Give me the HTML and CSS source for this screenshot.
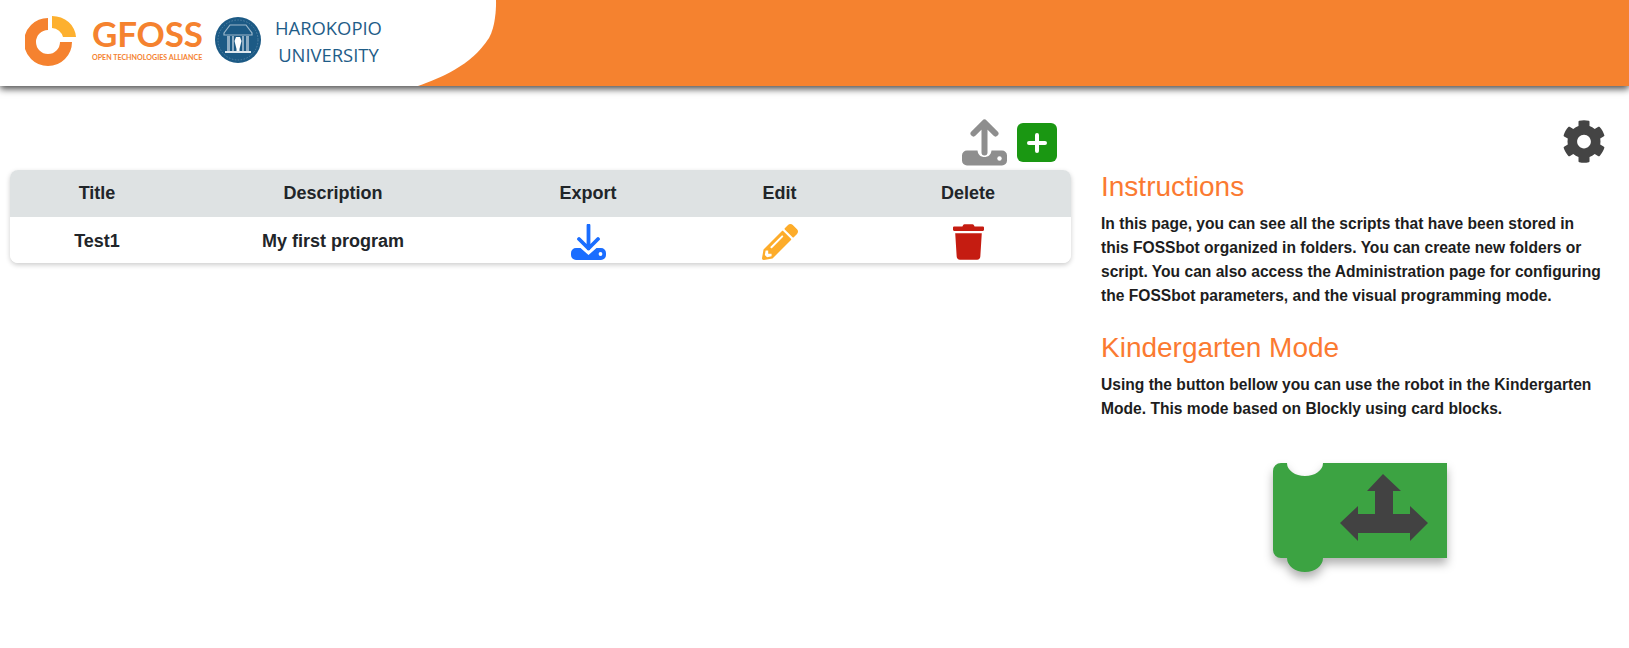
FILE: index.html
```html
<!DOCTYPE html>
<html lang="en">
<head>
<meta charset="utf-8">
<title>FOSSbot</title>
<link rel="stylesheet" href="styles.css">
</head>
<body>
<header class="topbar">
  <svg class="wave" viewBox="0 0 500 86" aria-hidden="true"><path d="M0 0H496C496 0 497 24 489 38C471 66 440 78 418 86H0Z"/></svg>
  <div class="brand">
    <svg class="gfoss-mark" viewBox="0 0 52 50" aria-hidden="true">
      <path class="ring" d="M23 8A18 18 0 1 0 41 26"/>
      <path class="ring-y" d="M27 0A24 22 0 0 1 51 21H38A12 12 0 0 0 27 12Z"/>
    </svg>
    <div class="gfoss-text">
      <span class="gfoss-name">GFOSS</span>
      <span class="gfoss-sub">OPEN TECHNOLOGIES ALLIANCE</span>
    </div>
    <svg class="seal" viewBox="0 0 46 46" aria-hidden="true">
      <circle cx="23" cy="23" r="23" fill="#1c5a85"/>
      <circle cx="23" cy="23" r="20" fill="none" stroke="#5f8bab" stroke-width=".8" stroke-dasharray="1.5 1.5"/>
      <path d="M9 16L15 8H31L37 16V18H9Z" fill="none" stroke="#9db8cb" stroke-width="1.200"/>
      <path d="M12 19h3v15h-3zM31 19h3v15h-3zM27 19h2v15h-2zM17 19h2v15h-2z" fill="#8fadc3"/>
      <path d="M21 20h4l1.500 4-2 8v2h-3v-2l-2-8Z" fill="#fff"/>
      <path d="M10 34h26v2H10z" fill="#dfe8ef"/>
    </svg>
    <div class="uni">HAROKOPIO<br>UNIVERSITY</div>
  </div>
</header>

<main class="layout">
  <section class="programs">
    <div class="toolbar">
      <svg class="upload" viewBox="0 0 46 46" aria-hidden="true">
        <path class="disk-g" d="M5 31H15.500C16 35.500 19 37.500 22.500 37.500S29 35.500 29.500 31H40A5 5 0 0 1 45 36V41A5 5 0 0 1 40 46H5A5 5 0 0 1 0 41V36A5 5 0 0 1 5 31Z"/>
        <circle cx="37.500" cy="39" r="2.200" fill="#fff"/>
        <path class="arrow-g" d="M22.500 33V3.500M11.500 14L22.500 3L33.500 14"/>
      </svg>
      <button class="add" type="button" aria-label="Add">
        <svg viewBox="0 0 20 20" aria-hidden="true"><path d="M10 2V18M2 10H18"/></svg>
      </button>
    </div>
    <table class="scripts">
      <thead>
        <tr><th class="c1">Title</th><th class="c2">Description</th><th class="c3">Export</th><th class="c4">Edit</th><th class="c5">Delete</th></tr>
      </thead>
      <tbody>
        <tr>
          <td>Test1</td>
          <td>My first program</td>
          <td>
            <svg class="ico ico-dl" viewBox="0 0 35 36" aria-hidden="true">
              <path d="M5 24H9.500L17.500 31L25.500 24H30A5 5 0 0 1 35 29V31A5 5 0 0 1 30 36H5A5 5 0 0 1 0 31V29A5 5 0 0 1 5 24Z"/>
              <circle cx="29.500" cy="30" r="1.900" fill="#fff"/>
              <path class="dl-arrow" d="M17.500 1.500V24.500M8 15L17.500 24.500L27 15"/>
            </svg>
          </td>
          <td>
            <svg class="ico ico-pen" viewBox="0 0 512 512" aria-hidden="true"><path d="M497.900 142.100l-46.100 46.100c-4.700 4.700-12.300 4.700-17 0l-111-111c-4.700-4.700-4.700-12.300 0-17l46.100-46.100c18.700-18.700 49.100-18.700 67.900 0l60.100 60.100c18.800 18.700 18.800 49.100 0 67.900zM284.200 99.800L21.600 362.400.4 483.900c-2.900 16.400 11.400 30.600 27.800 27.800l121.500-21.300 262.600-262.600c4.700-4.700 4.700-12.300 0-17l-111-111c-4.800-4.700-12.400-4.700-17.100 0zM124.100 339.900c-5.500-5.500-5.500-14.300 0-19.800l154-154c5.500-5.500 14.300-5.500 19.800 0s5.500 14.300 0 19.800l-154 154c-5.500 5.500-14.300 5.500-19.800 0zM88 424h48v36.300l-64.500 11.300-31.100-31.100L51.700 376H88v48z"/></svg>
          </td>
          <td>
            <svg class="ico ico-trash" viewBox="0 0 448 512" aria-hidden="true"><path d="M432 32H312l-9.400-18.700A24 24 0 0 0 281.100 0H166.800a23.720 23.720 0 0 0-21.400 13.300L136 32H16A16 16 0 0 0 0 48v32a16 16 0 0 0 16 16h416a16 16 0 0 0 16-16V48a16 16 0 0 0-16-16zM53.200 467a48 48 0 0 0 47.900 45h245.800a48 48 0 0 0 47.900-45L416 128H32z"/></svg>
          </td>
        </tr>
      </tbody>
    </table>
  </section>

  <aside class="help">
    <div class="gear-row">
      <svg class="gear" viewBox="0 0 512 512" aria-hidden="true"><path d="M487.400 315.700l-42.600-24.600c4.300-23.200 4.300-47 0-70.200l42.600-24.600c4.900-2.800 7.100-8.600 5.500-14-11.100-35.600-30-67.800-54.700-94.600-3.800-4.100-10-5.100-14.800-2.300L380.800 110c-17.900-15.400-38.500-27.300-60.800-35.100V25.800c0-5.600-3.900-10.500-9.400-11.700-36.700-8.200-74.300-7.800-109.200 0-5.500 1.200-9.400 6.100-9.400 11.700V75c-22.200 7.900-42.800 19.800-60.800 35.100L88.700 85.500c-4.900-2.800-11-1.900-14.800 2.300-24.700 26.700-43.600 58.900-54.700 94.600-1.700 5.400.6 11.200 5.500 14L67.300 221c-4.300 23.200-4.300 47 0 70.200l-42.600 24.600c-4.900 2.800-7.100 8.600-5.500 14 11.100 35.600 30 67.800 54.700 94.600 3.800 4.100 10 5.100 14.800 2.300l42.600-24.600c17.900 15.400 38.500 27.300 60.800 35.100v49.200c0 5.600 3.900 10.500 9.400 11.700 36.700 8.200 74.300 7.800 109.200 0 5.500-1.200 9.400-6.100 9.400-11.700v-49.200c22.200-7.900 42.800-19.800 60.800-35.100l42.600 24.600c4.900 2.800 11 1.900 14.800-2.300 24.700-26.700 43.600-58.900 54.700-94.600 1.500-5.500-.7-11.300-5.600-14.100zM256 336c-44.100 0-80-35.900-80-80s35.900-80 80-80 80 35.900 80 80-35.900 80-80 80z"/></svg>
    </div>
    <h2>Instructions</h2>
    <p>In this page, you can see all the scripts that have been stored in this FOSSbot organized in folders. You can create new folders or script. You can also access the Administration page for configuring the FOSSbot parameters, and the visual programming mode.</p>
    <h2>Kindergarten Mode</h2>
    <p>Using the button bellow you can use the robot in the Kindergarten Mode. This mode based on Blockly using card blocks.</p>
    <div class="block-row">
      <svg class="block" viewBox="0 0 174 109" aria-hidden="true">
        <path class="block-bg" d="M8 0H14A18 13 0 0 0 50 0H174V95H50A18 14 0 0 1 14 95H8A8 8 0 0 1 0 87V8A8 8 0 0 1 8 0Z"/>
        <path class="block-arrow" d="M110 11L128 28H120V51H137V43L155 60L137 78V70H85V78L67 60L85 43V51H102V28H94Z"/>
      </svg>
    </div>
  </aside>
</main>
</body>
</html>
```
FILE: styles.css
```css
* { box-sizing: border-box; }

html, body {
  margin: 0;
  padding: 0;
  background: #fff;
  color: #212529;
  font-family: "Liberation Sans", Arial, sans-serif;
}

body { height: 648px; overflow: hidden; }

.topbar {
  position: relative;
  height: 86px;
  background: #f5822f;
  box-shadow: 0 3px 7px rgba(0, 0, 0, .7);
}

.wave {
  position: absolute;
  left: 0;
  top: 0;
  width: 500px;
  height: 86px;
  fill: #fff;
}

.brand {
  position: relative;
  display: flex;
  align-items: flex-start;
  padding: 16px 0 0 25px;
}

.gfoss-mark { width: 52px; height: 50px; flex: none; }
.ring { fill: none; stroke: #f5822f; stroke-width: 12; }
.ring-y { fill: #fdb02f; }

.gfoss-text {
  display: flex;
  flex-direction: column;
  margin-left: 15px;
  width: 110px;
  color: #f5822f;
  font-family: Lato, sans-serif;
  font-weight: 700;
}

.gfoss-name {
  font-size: 35px;
  line-height: 35px;
  letter-spacing: -.2px;
}

.gfoss-sub {
  font-size: 7.100px;
  line-height: 8px;
  margin-top: 3px;
  white-space: nowrap;
}

.seal { width: 46px; height: 46px; flex: none; margin: 1px 0 0 13px; }

.uni {
  margin: -2px 0 0 14px;
  color: #1f5d88;
  font-family: "Open Sans", sans-serif;
  font-size: 18.400px;
  line-height: 27px;
  text-align: center;
}

.layout {
  display: grid;
  grid-template-columns: 1071px 1fr;
  column-gap: 30px;
}

.programs { padding: 33px 0 0 10px; }

.toolbar {
  display: flex;
  justify-content: flex-end;
  align-items: flex-start;
  gap: 9px;
  height: 51px;
  padding: 0 14px 0 0;
}

.upload { width: 46px; height: 47px; flex: none; }
.disk-g { fill: #8e8e8e; }
.arrow-g { fill: none; stroke: #8e8e8e; stroke-width: 6; stroke-linecap: round; stroke-linejoin: round; }

.add {
  display: flex;
  align-items: center;
  justify-content: center;
  width: 40px;
  height: 39px;
  margin-top: 4px;
  padding: 0;
  border: 0;
  border-radius: 6px;
  background: #1a9712;
}

.add svg { width: 20px; height: 20px; fill: none; stroke: #fff; stroke-width: 4; stroke-linecap: round; }

.scripts {
  width: 1061px;
  table-layout: fixed;
  border-collapse: separate;
  border-spacing: 0;
  border-radius: 8px;
  overflow: hidden;
  box-shadow: 0 2px 5px rgba(0, 0, 0, .2);
  font-size: 18px;
  font-weight: 700;
  text-align: center;
}

.scripts th { height: 47px; padding: 0; background: #dee2e3; font-size: 18px; }
.scripts td { height: 46px; padding: 2px 0 0; background: #fff; vertical-align: middle; }

.c1 { width: 174px; }
.c2 { width: 298px; }
.c3 { width: 212px; }
.c4 { width: 171px; }
.c5 { width: 206px; }

.ico { display: block; margin: 2px auto 0; height: 36px; }
.ico-dl { width: 35px; fill: #1a6dff; }
.dl-arrow { fill: none; stroke: #1a6dff; stroke-width: 3.800; stroke-linecap: round; stroke-linejoin: round; }
.ico-pen { width: 36px; fill: #fdac2a; }
.ico-trash { width: 31px; fill: #c51c11; }

.help { padding: 32px 0 0; }

.gear-row { display: flex; justify-content: flex-end; height: 53px; padding-right: 23px; }
.gear { width: 44px; height: 47px; fill: #444; }

.help h2 {
  margin: 0;
  color: #fb7a31;
  font-size: 28px;
  font-weight: 400;
  line-height: 32px;
}

.help p {
  max-width: 502px;
  margin: 9px 0 24px;
  font-size: 15.600px;
  font-weight: 700;
  line-height: 24px;
  color: #1d1d1d;
}

.block-row { display: flex; justify-content: center; margin-top: 42px; padding-right: 11px; }

.block { width: 174px; height: 109px; overflow: visible; filter: drop-shadow(0 6px 5px rgba(0, 0, 0, .3)); }
.block-bg { fill: #3ca342; }
.block-arrow { fill: #424242; }
```
